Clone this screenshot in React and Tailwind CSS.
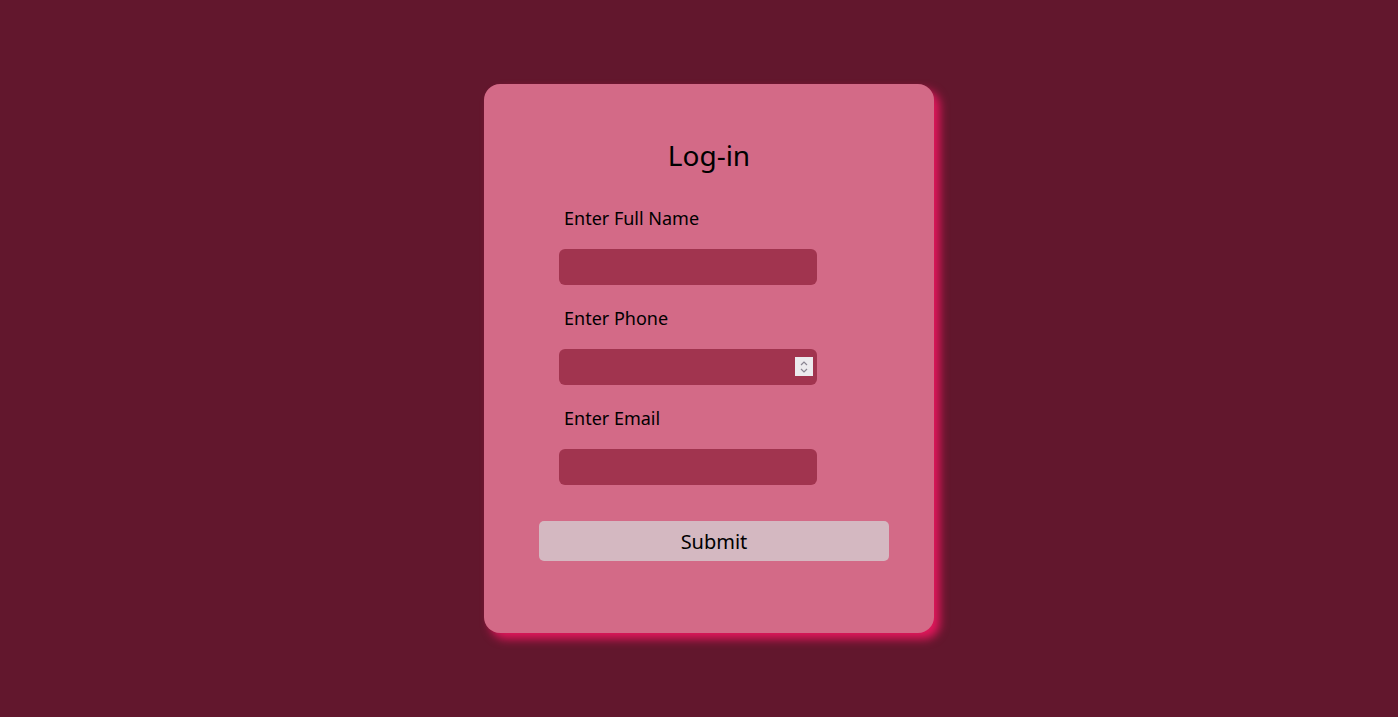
export default function App() {
  const fields = [
    { label: 'Enter Full Name', type: 'text' },
    { label: 'Enter Phone', type: 'text', spinner: true },
    { label: 'Enter Email', type: 'email' },
  ]

  return (
    <div className="min-h-screen bg-[#62172d] flex justify-center pl-5 pt-[84px] font-['Noto_Sans',sans-serif] text-black">
      <div className="w-[450px] h-[549px] bg-[#d36a87] rounded-2xl shadow-[6px_6px_10px_#e3175c] pt-[137px]">
        <h1 className="text-[28px] leading-9 text-center -mt-[84px]">Log-in</h1>
        <div className="mt-[33px]">
          {fields.map((f, i) => (
            <div key={f.label} className={i > 0 ? 'mt-[21px]' : ''}>
              <label className="block pl-20 text-[18px] leading-6">{f.label}</label>
              <div className="relative ml-[75px] mt-[19px] w-[258px]">
                <input
                  type={f.type}
                  className="block w-full h-9 rounded-md bg-[#a1344f] outline-none px-2"
                />
                {f.spinner && (
                  <div className="absolute right-1 top-2 w-[18px] h-[19px] bg-[#eceaee] flex flex-col items-center justify-center">
                    <svg width="10" height="14" viewBox="0 0 10 14" fill="none" stroke="#8a8592" strokeWidth="1.2">
                      <path d="M2 5l3-3 3 3" />
                      <path d="M2 9l3 3 3-3" />
                    </svg>
                  </div>
                )}
              </div>
            </div>
          ))}
        </div>
        <button className="block ml-[55px] mt-9 w-[350px] h-10 rounded-[5px] bg-[#d4b8c1] text-[20px] leading-none pt-px">
          Submit
        </button>
      </div>
    </div>
  )
}
